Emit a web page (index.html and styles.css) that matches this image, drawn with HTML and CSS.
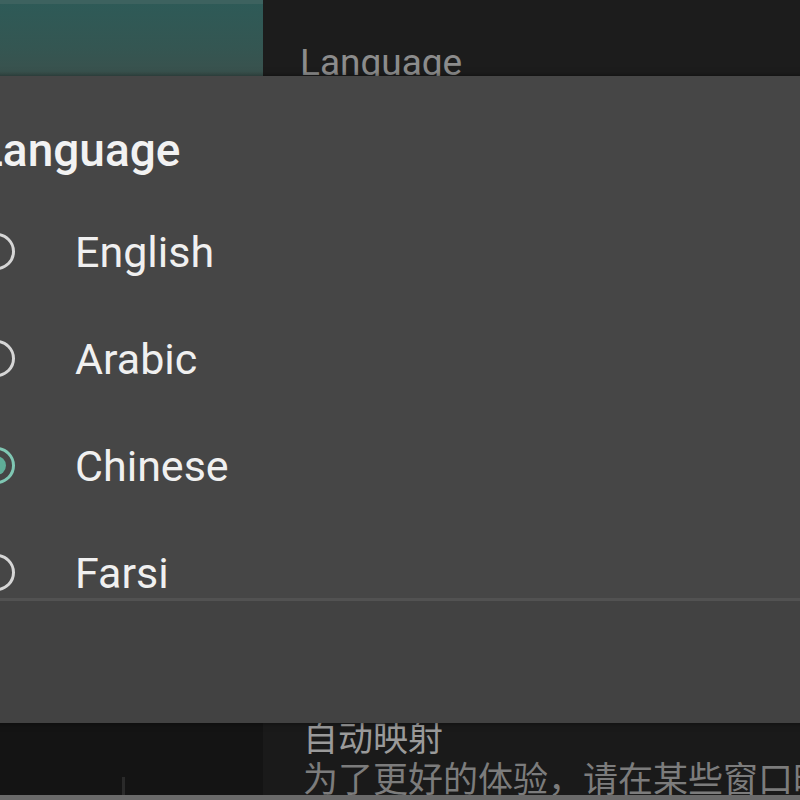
FILE: index.html
```html
<!DOCTYPE html>
<html lang="en">
<head>
    <meta charset="UTF-8">
    <meta name="viewport" content="width=device-width, initial-scale=1.0">
    <title>Language</title>
    <link rel="stylesheet" href="styles.css">
</head>
<body>
    <div class="page">
        <div class="topbar">
            <div class="side-panel"></div>
            <div class="pref-title">Language</div>
        </div>
        <div class="pref-body"></div>
        <div class="pref-bottom">
            <div class="bottom-side"><span class="tick"></span></div>
            <div class="pref-item">
                <div class="pref-name">自动映射</div>
                <div class="pref-summary">为了更好的体验，请在某些窗口时</div>
            </div>
        </div>
    </div>

    <div class="dialog">
        <div class="dialog-title">Language</div>
        <ul class="options">
            <li class="option"><span class="radio"></span>English</li>
            <li class="option"><span class="radio"></span>Arabic</li>
            <li class="option"><span class="radio checked"></span>Chinese</li>
            <li class="option"><span class="radio"></span>Farsi</li>
        </ul>
        <div class="dialog-actions"></div>
    </div>
</body>
</html>
```

FILE: styles.css
```css
/* General Styles */
body {
    margin: 0;
    padding: 0;
    background-color: #1b1b1b;
    font-family: Roboto, "Noto Sans CJK SC", sans-serif;
    overflow: hidden;
    height: 800px;
}

.page {
    display: flex;
    flex-direction: column;
    height: 800px;
}

/* Background screen */
.topbar {
    display: flex;
    height: 76px;
}

.side-panel {
    width: 263px;
    background: linear-gradient(180deg, #2e5a57 0%, #345652 60%, #3a514d 100%);
    border-top: 4px solid #3d625f;
    box-sizing: border-box;
}

.pref-title {
    flex: 1;
    padding: 40px 0 0 37px;
    font-size: 37px;
    line-height: 46px;
    color: #8c8c8c;
    background-color: #1c1c1c;
    overflow: hidden;
}

.pref-body {
    flex: 1;
}

.pref-bottom {
    display: flex;
    height: 76px;
    border-bottom: 5px solid #6a6a6a;
}

.bottom-side {
    width: 263px;
    background-color: #141414;
    position: relative;
}

.tick {
    position: absolute;
    left: 122px;
    bottom: 0;
    width: 3px;
    height: 18px;
    background-color: #2a2a2a;
}

.pref-item {
    flex: 1;
    padding: 2px 0 0 40px;
    background-color: #1a1a1a;
    white-space: nowrap;
    overflow: hidden;
}

.pref-name {
    font-size: 35px;
    color: #9a9a9a;
    line-height: 38px;
}

.pref-summary {
    font-size: 35px;
    color: #7c7c7c;
    line-height: 44px;
}

/* Dialog */
.dialog {
    position: absolute;
    top: 76px;
    left: -60px;
    width: 900px;
    height: 647px;
    background-color: #464646;
    display: flex;
    flex-direction: column;
    box-shadow: 0 0 6px rgba(0, 0, 0, 0.5);
}

.dialog-title {
    padding: 44px 0 0 38px;
    font-size: 46px;
    font-weight: 500;
    color: #f2f2f2;
    line-height: 60px;
    height: 104px;
    box-sizing: border-box;
}

.options {
    list-style: none;
    margin: 0;
    padding: 18px 0 0;
    height: 421px;
    box-sizing: border-box;
    border-bottom: 3px solid #525252;
    overflow: hidden;
}

.option {
    display: flex;
    align-items: center;
    gap: 60px;
    height: 107px;
    padding-left: 38px;
    font-size: 43px;
    color: #f0f0f0;
}

.radio {
    width: 31px;
    height: 31px;
    border: 3px solid #d6d6d6;
    border-radius: 50%;
    flex-shrink: 0;
    position: relative;
}

.radio.checked {
    border-color: #7fc7b3;
}

.radio.checked::after {
    content: "";
    position: absolute;
    top: 6px;
    left: 6px;
    width: 19px;
    height: 19px;
    border-radius: 50%;
    background-color: #5fae98;
}

.dialog-actions {
    flex: 1;
    background-color: #424242;
}
```
